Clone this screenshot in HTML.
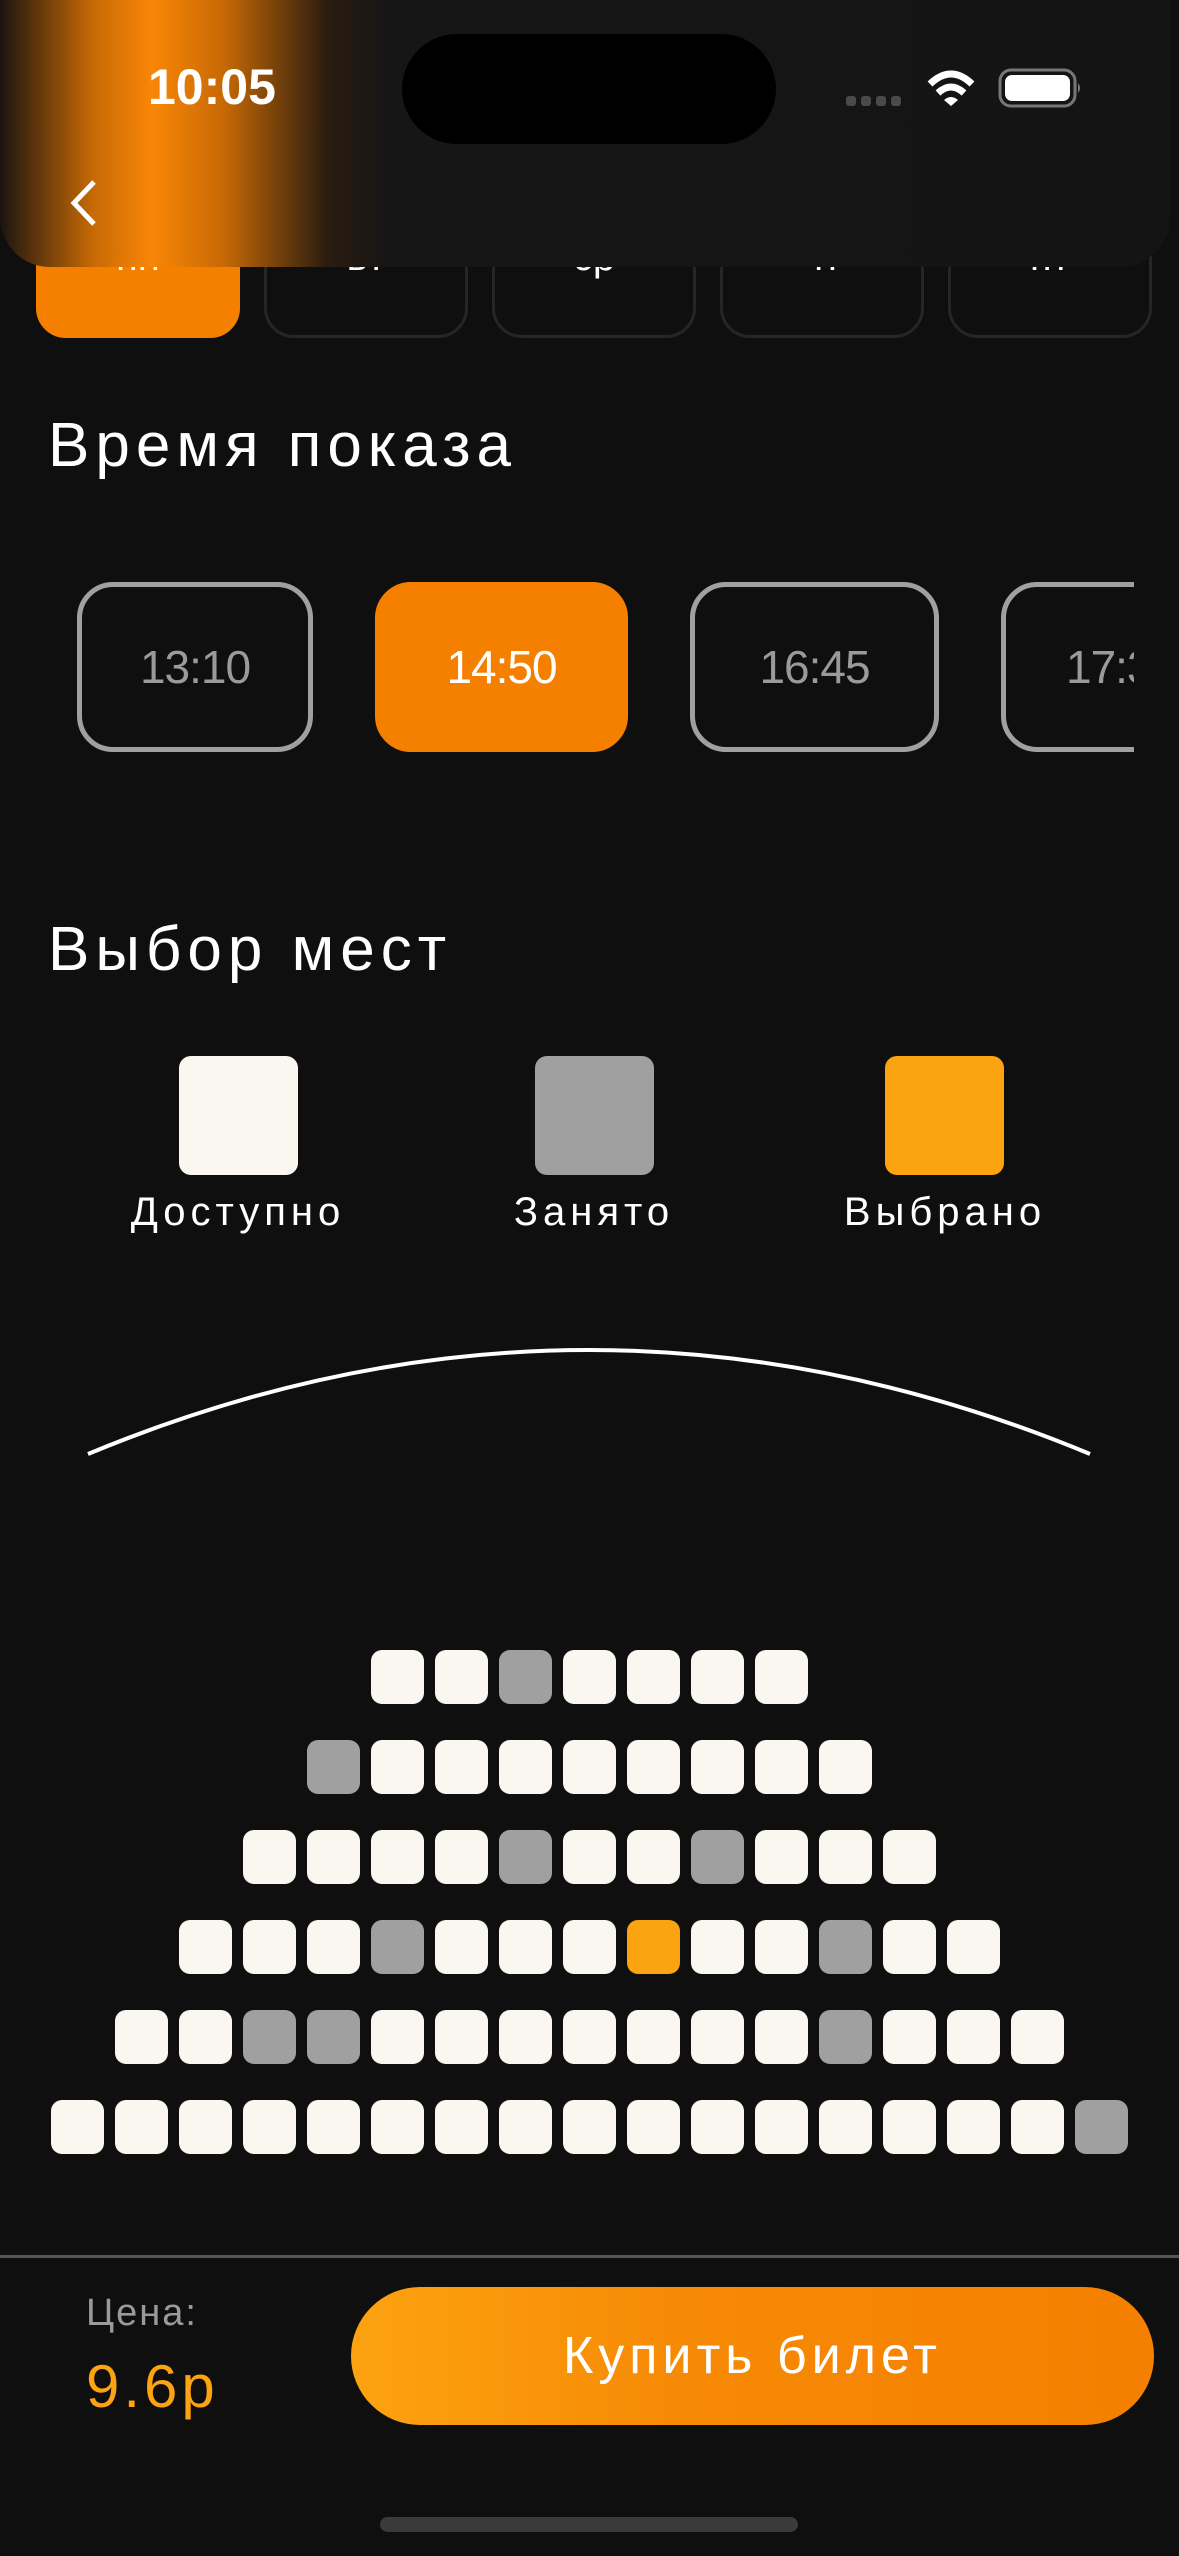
<!DOCTYPE html>
<html><head><meta charset="utf-8"><style>
*{margin:0;padding:0;box-sizing:border-box}
body{width:1179px;height:2556px;background:#0f0f0f;position:relative;overflow:hidden;font-family:"Liberation Sans",sans-serif;color:#fff}
.a{position:absolute}
.tab{position:absolute;top:220px;width:204px;height:118px;border:3px solid #262626;border-radius:30px;text-align:center;color:#fff;font-size:40px;padding-top:12px}
.chip{position:absolute;top:582px;height:170px;border:5px solid #a0a0a0;border-radius:36px;color:#9a9a9a;font-size:46px;display:flex;align-items:center;justify-content:center;letter-spacing:-1px}
.row{position:absolute;left:0;width:1179px;display:flex;justify-content:center;gap:11px}
.row i{display:block;width:53px;height:54px;background:#faf7f0;border-radius:11px}
.row i.g{background:#a0a0a0}.row i.o{background:#fca311}
.lg{position:absolute;top:1056px;width:119px;height:119px;border-radius:12px}
.ll{position:absolute;top:1190px;font-size:40px;color:#fff;text-align:center;width:300px;letter-spacing:5px}
.h{position:absolute;left:48px;font-size:62px;letter-spacing:6px}
</style></head><body>
<div class="tab" style="left:36px;background:#f58000;border-color:#f58000">пн</div>
<div class="tab" style="left:264px">вт</div>
<div class="tab" style="left:492px">ср</div>
<div class="tab" style="left:720px">чт</div>
<div class="tab" style="left:948px">пт</div>
<div class="a" style="left:0;top:0;width:1170px;height:267px;border-radius:0 0 50px 50px;background:linear-gradient(90deg,#1b1410 0%,#c86a05 8%,#f98607 13%,#c86a05 19%,#2a1c10 28%,#161616 33%,#141414 100%)"></div>
<div class="a" style="left:402px;top:34px;width:374px;height:110px;border-radius:55px;background:#000"></div>
<div class="a" style="left:148px;top:58px;font-size:50px;font-weight:bold">10:05</div>
<svg class="a" style="left:840px;top:60px" width="250" height="60" viewBox="840 60 250 60">
<g fill="#4a4a4a"><rect x="846" y="96" width="10" height="10" rx="3"/><rect x="861" y="96" width="10" height="10" rx="3"/><rect x="876" y="96" width="10" height="10" rx="3"/><rect x="891" y="96" width="10" height="10" rx="3"/></g>
<g fill="none" stroke="#fff" stroke-width="7"><path d="M930 84 Q951 64 972 84"/><path d="M938 93 Q951 81 964 93"/></g>
<path d="M944 100 L951 106 L958 100 Q951 94 944 100Z" fill="#fff"/>
<rect x="1000" y="70" width="75" height="36" rx="11" fill="none" stroke="#777" stroke-width="3"/>
<rect x="1005" y="75" width="65" height="26" rx="7" fill="#fff"/>
<path d="M1078 83 Q1082 88 1078 93Z" fill="#777"/>
</svg>
<svg class="a" style="left:64px;top:178px" width="40" height="50"><path d="M30 4 L10 25 L30 46" fill="none" stroke="#fff" stroke-width="5"/></svg>
<div class="h" style="top:410px">Время показа</div>
<div class="chip" style="left:77px;width:236px">13:10</div>
<div class="chip" style="left:375px;width:253px;background:#f58000;border-color:#f58000;color:#fff">14:50</div>
<div class="chip" style="left:690px;width:249px">16:45</div>
<div class="a" style="left:1001px;top:582px;width:133px;height:170px;overflow:hidden"><div class="chip" style="left:0;top:0;width:250px;justify-content:flex-start;padding-left:60px">17:30</div></div>
<div class="h" style="top:914px">Выбор мест</div>
<div class="lg" style="left:179px;background:#faf7f0"></div>
<div class="lg" style="left:535px;background:#a0a0a0"></div>
<div class="lg" style="left:885px;background:#fca311"></div>
<div class="ll" style="left:88px">Доступно</div>
<div class="ll" style="left:444px">Занято</div>
<div class="ll" style="left:795px">Выбрано</div>
<svg class="a" style="left:0;top:1330px" width="1179" height="140"><path d="M88 124 Q589 -84 1090 124" fill="none" stroke="#fff" stroke-width="4"/></svg>
<div class="row" style="top:1650px"><i></i><i></i><i class="g"></i><i></i><i></i><i></i><i></i></div>
<div class="row" style="top:1740px"><i class="g"></i><i></i><i></i><i></i><i></i><i></i><i></i><i></i><i></i></div>
<div class="row" style="top:1830px"><i></i><i></i><i></i><i></i><i class="g"></i><i></i><i></i><i class="g"></i><i></i><i></i><i></i></div>
<div class="row" style="top:1920px"><i></i><i></i><i></i><i class="g"></i><i></i><i></i><i></i><i class="o"></i><i></i><i></i><i class="g"></i><i></i><i></i></div>
<div class="row" style="top:2010px"><i></i><i></i><i class="g"></i><i class="g"></i><i></i><i></i><i></i><i></i><i></i><i></i><i></i><i class="g"></i><i></i><i></i><i></i></div>
<div class="row" style="top:2100px"><i></i><i></i><i></i><i></i><i></i><i></i><i></i><i></i><i></i><i></i><i></i><i></i><i></i><i></i><i></i><i></i><i class="g"></i></div>
<div class="a" style="left:0;top:2255px;width:1179px;height:3px;background:#555"></div>
<div class="a" style="left:86px;top:2292px;font-size:38px;color:#9a9a9a;letter-spacing:2px">Цена:</div>
<div class="a" style="left:86px;top:2352px;font-size:60px;color:#fca311;letter-spacing:4px">9.6р</div>
<div class="a" style="left:351px;top:2287px;width:803px;height:138px;border-radius:69px;background:linear-gradient(90deg,#fca311,#f78a05 40%,#f57f00);display:flex;align-items:center;justify-content:center;font-size:52px;color:#fff;letter-spacing:5px">Купить билет</div>
<div class="a" style="left:380px;top:2517px;width:418px;height:15px;border-radius:8px;background:#3a3a3a"></div>
</body></html>
